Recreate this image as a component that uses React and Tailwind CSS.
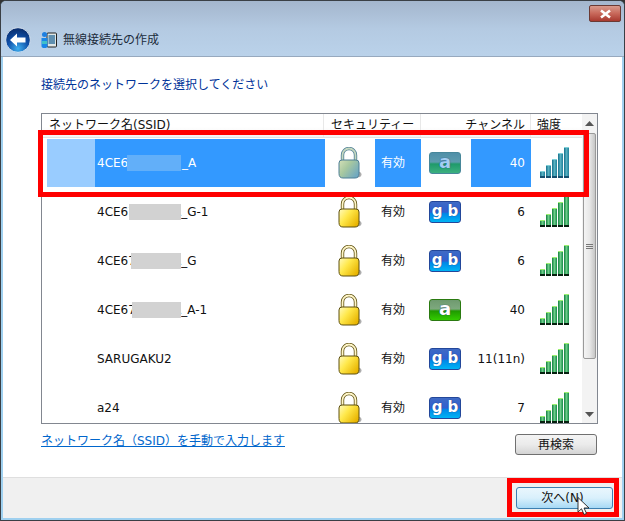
import React from "react";

const rows = [
  { pre: "4CE6", suf: "_A", w: "w-[85px]", selected: true, band: "a", ch: "40", patch: "left-[32px] w-[54px]" },
  { pre: "4CE67", suf: "A_G-1", w: "w-[76px]", band: "gb", ch: "6", patch: "left-[34px] w-[52px]" },
  { pre: "4CE67", suf: "A_G", w: "w-[76px]", band: "gb", ch: "6", patch: "left-[36px] w-[50px]" },
  { pre: "4CE67", suf: "A_A-1", w: "w-[76px]", band: "a", ch: "40", patch: "left-[37px] w-[49px]" },
  { pre: "SARUGAKU2", suf: "", w: "", band: "gb", ch: "11(11n)" },
  { pre: "a24", suf: "", w: "", band: "gb", ch: "7" },
];

function Lock({ muted, id }) {
  const c0 = muted ? "#d5e0b8" : "#fffbc0";
  const c1 = muted ? "#a8c8a0" : "#ffe84a";
  const c2 = muted ? "#6fa8c0" : "#e8b400";
  const s = muted ? "#4f7f96" : "#5e5010";
  const sh = muted ? "#c5d8c0" : "#fff6c8";
  return (
    <svg width="25" height="33" viewBox="0 0 25 33" className="block">
      <defs>
        <linearGradient id={id} x1="0" y1="0" x2="1" y2="0.7">
          <stop offset="0" stopColor={c0} />
          <stop offset="0.45" stopColor={c1} />
          <stop offset="1" stopColor={c2} />
        </linearGradient>
      </defs>
      <ellipse cx="20" cy="27.5" rx="4.5" ry="3" fill="#8a8a8a" opacity="0.7" />
      <path d="M5.5 15V8a6.5 6.5 0 0 1 13 0V15" fill="none" stroke={s} strokeWidth="3.4" />
      <path d="M5.5 15V8a6.5 6.5 0 0 1 13 0V15" fill="none" stroke={sh} strokeWidth="1.8" />
      <path d="M2 16 Q2 13 5 13 H19 Q22 13 22 16 V26.5 Q22 31 18 31 H6 Q2 31 2 26.5 Z" fill={`url(#${id})`} stroke={s} strokeWidth="1" />
    </svg>
  );
}

function Badge({ band, muted }) {
  let bg = "bg-[linear-gradient(#3f6ac4_0%,#2f5fd0_50%,#0088e8_58%,#00b4f4_100%)] border-[#23479a]";
  if (band === "a") bg = "bg-[linear-gradient(#6f9a6f_0%,#7ea97e_45%,#1f9a00_55%,#33cc00_100%)] border-[#2a7a10]";
  if (muted) bg = "bg-[linear-gradient(#4f8fa8_0%,#5d9cae_45%,#1f9a6a_55%,#3cb080_100%)] border-[#47879a]";
  const txt = muted ? "text-[#a4cef2]" : "text-white";
  return (
    <div className={`w-[32px] h-[22px] rounded-[3px] border flex items-center justify-center gap-[5px] ${bg} ${txt} font-['DejaVu_Sans',sans-serif] [text-shadow:0_0_1px_#12306a]`}>
      {band === "a" ? (
        <span className="text-[18px] leading-[18px] font-bold -mt-[1px]">a</span>
      ) : (
        <>
          <span className="text-[15px] font-bold leading-[18px] -mt-[1px]">g</span>
          <span className="text-[15px] font-bold leading-[18px] -mt-[1px]">b</span>
        </>
      )}
    </div>
  );
}

function Signal({ muted }) {
  const heights = ["h-[7px]", "h-[13px]", "h-[19px]", "h-[25px]", "h-[31px]"];
  const bar = muted
    ? "bg-[linear-gradient(90deg,#17708c,#57b0c0,#1f7f9a)] border-t border-t-[#7fd0d8] border-b-2 border-b-[#15506f]"
    : "bg-[linear-gradient(90deg,#13803f,#6ccc88,#148a48)] border-t border-t-[#9cf070] border-b-2 border-b-[#06200f]";
  return (
    <div className="h-[40px] self-start flex items-end gap-[1px] ml-[9px]">
      {heights.map((h) => (
        <div key={h} className={`w-[5px] ${h} ${bar}`} />
      ))}
    </div>
  );
}

function Row({ r, i }) {
  const sel = r.selected;
  const cellBg = sel ? "bg-[#3399ff] text-white h-[48px] self-end" : "h-full";
  return (
    <div className="flex h-[49px] shrink-0 items-center pl-[5px]">
      <div className={`w-[48px] ${sel ? "bg-[#99ccff] h-[48px] self-end" : "h-full"}`} />
      <div className={`w-[230px] pl-[2px] flex items-center relative ${cellBg}`}>
        {r.w ? <span className={`inline-block ${r.w}`}>{r.pre}</span> : <span>{r.pre}</span>}
        {r.suf && <span>{r.suf}</span>}
        {r.patch && (
          <div className={`absolute top-1/2 -translate-y-1/2 h-[16px] blur-[0.5px] ${r.patch} ${sel ? "bg-[#62aff9]" : "bg-[#d2d2d2]"}`} />
        )}
      </div>
      <div className="w-[50px] pl-[12px] h-full flex items-start pt-[9px]">
        <Lock muted={sel} id={`lock${i}`} />
      </div>
      <div className={`w-[46px] pl-[6px] flex items-center ${cellBg}`}>有効</div>
      <div className="w-[50px] pl-[8px]">
        <Badge band={r.band} muted={sel} />
      </div>
      <div className={`w-[60px] pr-[6px] flex items-center justify-end ${cellBg}`}>{r.ch}</div>
      <div className="w-[50px] h-full flex items-start pt-0">
        <Signal muted={sel} />
      </div>
    </div>
  );
}

export default function App() {
  return (
    <div className="relative w-[625px] h-[521px] overflow-hidden bg-[#333] font-['DejaVu_Sans','Noto_Sans_CJK_JP',sans-serif] text-[12px] text-[#111]">
      <div className="w-full h-full border border-[#3a3f45] rounded-t-[6px] bg-[#9fd0ef] flex flex-col overflow-hidden">
        <div className="h-[56px] shrink-0 bg-[linear-gradient(#a4b6cd,#b4cae2_50%,#bad2ea)] border-b border-b-[#97a9be] flex flex-col">
          <div className="flex justify-end pt-[4px] pr-[3px]">
            <div className="w-[32px] h-[17px] rounded-[2px] border border-[#6b3a34] bg-[linear-gradient(#d99a8c,#c8685a_50%,#a83a30)] flex items-center justify-center">
              <svg width="13" height="10" viewBox="0 0 13 10">
                <path d="M2 1.5 L11 8.5 M11 1.5 L2 8.5" stroke="#fff" strokeWidth="2.6" />
              </svg>
            </div>
          </div>
          <div className="flex items-center mt-[5px] pl-[4px]">
            <svg width="26" height="26" viewBox="0 0 26 26">
              <defs>
                <radialGradient id="bk" cx="0.5" cy="0.85" r="0.8">
                  <stop offset="0" stopColor="#3fb0f0" />
                  <stop offset="0.55" stopColor="#0f4fa8" />
                  <stop offset="1" stopColor="#0a2f70" />
                </radialGradient>
              </defs>
              <circle cx="13" cy="13" r="12.3" fill="url(#bk)" stroke="#e8f0f8" strokeWidth="0.8" />
              <path d="M5 13 L12 6.5 V10.5 H20.5 V15.5 H12 V19.5 Z" fill="#fff" />
            </svg>
            <svg width="16" height="18" viewBox="0 0 16 18" className="ml-[10px]">
              <rect x="6" y="2" width="9.5" height="14" rx="1" fill="#dfe6e6" stroke="#222" strokeWidth="1" />
              <rect x="7.5" y="4" width="6.5" height="9" fill="#5f8fb0" />
              <circle cx="3.5" cy="3.5" r="2.5" fill="#1e7fe0" />
              <path d="M0.5 7 H6.5 V15 Q6.5 17 3.5 17 Q0.5 17 0.5 15 Z" fill="#1a86e8" />
              <rect x="1" y="10" width="5" height="3" fill="#3fc0c8" />
            </svg>
            <span className="ml-[6px] text-[#1c2c3c]">無線接続先の作成</span>
          </div>
        </div>

        <div className="flex-1 mx-[2px] mb-[2px] bg-white flex flex-col min-h-0">
          <div className="h-[420px] shrink-0 pl-[38px] pt-[20px]">
            <div className="h-[16px] leading-[16px] text-[#003399]">接続先のネットワークを選択してください</div>
            <div className="mt-[20px] w-[557px] h-[311px] border border-[#828790] flex overflow-hidden">
              <div className="w-[540px] flex flex-col overflow-hidden">
                <div className="h-[24px] shrink-0 flex bg-[linear-gradient(#ffffff_55%,#f3f3f3)] border-b border-b-[#e3e3e3] leading-[22px]">
                  <div className="w-[282px] pl-[7px] border-r border-r-[#e8e8e8]">ネットワーク名(SSID)</div>
                  <div className="w-[97px] pl-[7px] border-r border-r-[#e8e8e8]">セキュリティー</div>
                  <div className="w-[110px] pr-[5px] text-right border-r border-r-[#e8e8e8]">チャンネル</div>
                  <div className="w-[50px] pl-[6px]">強度</div>
                </div>
                {rows.map((r, i) => (
                  <Row key={i} r={r} i={i} />
                ))}
              </div>
              <div className="w-[15px] shrink-0 bg-[#f3f3f3] flex flex-col">
                <div className="h-[18px] shrink-0 flex items-center justify-center">
                  <svg width="9" height="5" viewBox="0 0 9 5"><path d="M4.5 0 L9 5 H0 Z" fill="#555" /></svg>
                </div>
                <div className="h-[226px] mx-[1px] mt-[1px] rounded-[2px] border border-[#9a9a9a] bg-[linear-gradient(90deg,#f4f4f4,#e8e8e8_50%,#c6c6c6)] flex flex-col items-center justify-center gap-[1px]">
                  <div className="w-[7px] h-[1px] bg-[#777]" />
                  <div className="w-[7px] h-[1px] bg-[#777]" />
                  <div className="w-[7px] h-[1px] bg-[#777]" />
                </div>
                <div className="flex-1" />
                <div className="h-[18px] shrink-0 flex items-center justify-center">
                  <svg width="9" height="5" viewBox="0 0 9 5"><path d="M0 0 H9 L4.5 5 Z" fill="#555" /></svg>
                </div>
              </div>
            </div>
            <div className="mt-[10px] w-[556px] flex justify-between items-start">
              <a className="leading-[14px] text-[#0066cc] underline">ネットワーク名（SSID）を手動で入力します</a>
              <div className="w-[82px] h-[21px] rounded-[3px] border border-[#707070] bg-[linear-gradient(#f4f4f4,#ebebeb_50%,#d4d4d4)] flex items-center justify-center text-[#111]">
                再検索
              </div>
            </div>
          </div>
          <div className="flex-1 bg-[#f0f0f0] border-t border-t-[#dfdfdf] flex justify-end pr-[9px] pt-[9px]">
            <div className="w-[97px] h-[22px] rounded-[3px] border border-[#3c7fb1] bg-[linear-gradient(#eaf6fd,#d9f0fc_50%,#a7d9f5)] flex items-center justify-center text-[#111] pr-[4px]">
              次へ(N)
            </div>
          </div>
        </div>
      </div>

      <div className="absolute left-[38px] top-[130px] w-[551px] h-[67px] border-[5px] border-[#ff0000]" />
      <div className="absolute left-[507px] top-[478px] w-[112px] h-[39px] border-[5px] border-[#ff0000]" />
      <svg className="absolute left-[577px] top-[497px]" width="14" height="19" viewBox="0 0 14 19">
        <path d="M1 0.5 V15 L4.5 11.8 L7 17.5 L9.5 16.4 L7 11 H12 Z" fill="#fff" stroke="#222" strokeWidth="0.9" />
      </svg>
    </div>
  );
}
